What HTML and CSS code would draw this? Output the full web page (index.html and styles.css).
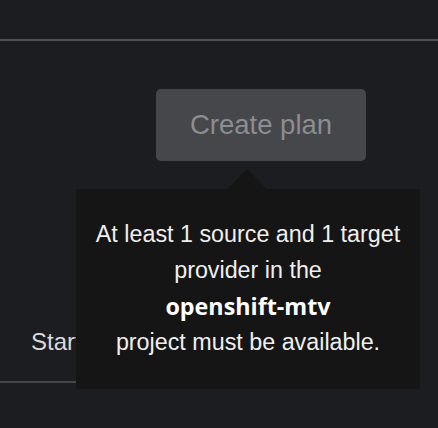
FILE: index.html
```html
<!DOCTYPE html>
<html lang="en">
<head>
<meta charset="utf-8">
<title>Create plan</title>
<link rel="stylesheet" href="styles.css">
</head>
<body>
<div class="page">
  <div class="masthead"></div>
  <div class="toolbar">
    <div class="action">
      <button class="btn" type="button" disabled>Create plan</button>
      <div class="tooltip" role="tooltip">
        <span class="line">At least 1 source and 1 target provider in the</span>
        <strong class="ns">openshift-mtv</strong>
        <span class="line">project must be available.</span>
      </div>
    </div>
  </div>
  <div class="tabs">
    <span class="tab">Started</span>
  </div>
</div>
</body>
</html>
```
FILE: styles.css
```css
html, body {
  margin: 0;
  padding: 0;
  background: #1b1d21;
}
.page {
  width: 438px;
  height: 428px;
  overflow: hidden;
  font-family: "Liberation Sans", Arial, sans-serif;
}
.masthead {
  height: 39px;
  border-bottom: 2px solid #4d4e52;
}
.toolbar {
  display: flex;
  justify-content: flex-end;
  padding: 48px 72px 0 0;
}
.action {
  display: flex;
}
.btn {
  width: 210px;
  height: 72px;
  border: 0;
  border-radius: 5px;
  background: #46474b;
  color: #8b8d90;
  font-family: "Liberation Sans", Arial, sans-serif;
  font-size: 27.5px;
  padding: 0;
  display: flex;
  align-items: center;
  justify-content: center;
}
.tooltip {
  position: absolute;
  left: 76px;
  top: 189px;
  width: 344px;
  height: 200px;
  box-sizing: border-box;
  padding: 27px 10px 0;
  background: #151515;
  color: #efefef;
  font-size: 23.3px;
  line-height: 36px;
  text-align: center;
  z-index: 2;
}
.tooltip::before {
  content: "";
  position: absolute;
  left: 156.8px;
  top: -14.15px;
  width: 28.3px;
  height: 28.3px;
  background: #151515;
  transform: rotate(45deg);
}
.tooltip .line {
  position: relative;
}
.tooltip .ns {
  position: relative;
  display: block;
  font-family: "Open Sans", "Liberation Sans", sans-serif;
  font-weight: 700;
  color: #ffffff;
}
.tabs {
  margin-top: 163px;
  width: 220px;
  padding: 0 0 21px 31px;
  border-bottom: 2px solid #45464a;
  box-sizing: border-box;
}
.tab {
  display: block;
  font-size: 24px;
  line-height: 36px;
  color: #dadada;
  white-space: nowrap;
}
```
